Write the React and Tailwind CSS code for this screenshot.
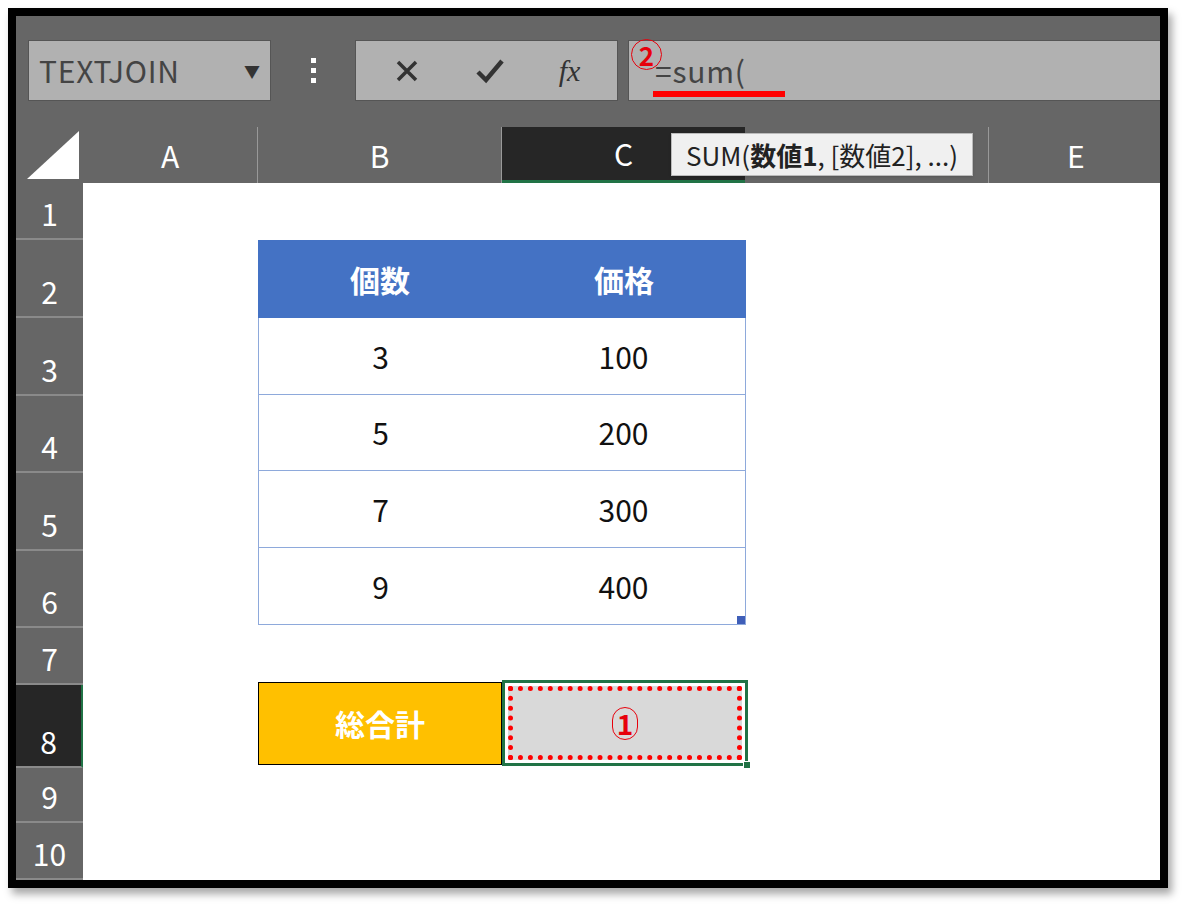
export default function App() {
  const rows = [
    { n: '1', h: 57 }, { n: '2', h: 78 }, { n: '3', h: 78 }, { n: '4', h: 77 }, { n: '5', h: 78 },
    { n: '6', h: 77 }, { n: '7', h: 57 }, { n: '8', h: 83 }, { n: '9', h: 55 }, { n: '10', h: 57 },
  ];
  const data = [['3', '100'], ['5', '200'], ['7', '300'], ['9', '400']];
  const font = { fontFamily: '"Noto Sans CJK JP", "Noto Sans", sans-serif' };
  return (
    <div className="w-[1186px] h-[905px] bg-white p-[8px] pb-[17px]" style={font}>
      <div className="w-[1160px] h-[880px] bg-black p-[8px] pr-[8px] shadow-[4px_6px_8px_rgba(0,0,0,0.35)]">
        <div className="w-[1144px] h-[864px] bg-[#666666] flex flex-col overflow-hidden">
          {/* formula bar */}
          <div className="h-[111px] flex items-start pt-[24px] pl-[12px] gap-[10px] relative">
            <div className="w-[243px] h-[61px] bg-[#b1b1b1] border border-[#555] flex items-center justify-between px-[10px] text-[30px] text-[#444]">
              <span className="tracking-wide">TEXTJOIN</span>
              <span className="text-[16px] text-[#333]">▼</span>
            </div>
            <div className="w-[64px] h-[61px] flex flex-col items-center justify-center gap-[5px]">
              <span className="w-[5px] h-[5px] bg-white" /><span className="w-[5px] h-[5px] bg-white" /><span className="w-[5px] h-[5px] bg-white" />
            </div>
            <div className="w-[263px] h-[61px] bg-[#b1b1b1] border border-[#555] flex items-center justify-around px-[10px] text-[#333]">
              <svg width="28" height="28" viewBox="0 0 28 28"><path d="M5 5L23 23M23 5L5 23" stroke="#333" strokeWidth="3.5" /></svg>
              <svg width="32" height="28" viewBox="0 0 32 28"><path d="M4 15L12 23L28 4" stroke="#333" strokeWidth="4.5" fill="none" /></svg>
              <span className="italic text-[30px]" style={{ fontFamily: '"Liberation Serif", serif' }}>fx</span>
            </div>
            <div className="flex-1 h-[61px] bg-[#b1b1b1] border border-[#555] border-r-0 flex items-center pl-[26px] text-[30px] text-[#444] relative">
              <span className="tracking-wide">=sum(</span>
              <span className="absolute left-[2px] top-[-2px] w-[31px] h-[31px] rounded-full border border-red-600 text-red-600 text-[26px] font-bold flex items-center justify-center leading-none">2</span>
              <span className="absolute left-[24px] top-[50px] w-[132px] h-[6px] bg-[#ff0000]" />
            </div>
          </div>
          {/* column header */}
          <div className="h-[56px] flex text-white text-[30px]">
            <div className="w-[67px] flex items-end justify-end pr-[4px] pb-[4px]">
              <svg width="52" height="48" viewBox="0 0 52 48"><polygon points="52,0 52,48 0,48" fill="#fff" /></svg>
            </div>
            <div className="w-[175px] flex items-center justify-center border-r border-[#999]">A</div>
            <div className="w-[244px] flex items-center justify-center border-r border-[#999]">B</div>
            <div className="w-[243px] flex items-center justify-center bg-[#262626] border-b-[3px] border-[#217346]">C</div>
            <div className="w-[244px] flex items-center justify-center border-r border-[#999] relative">
              <div className="absolute left-[-74px] top-[6px] h-[43px] px-[14px] bg-[#f0f0f0] border border-[#bbb] text-[#222] text-[26px] flex items-center whitespace-nowrap shadow">
                SUM(<b>数値1</b>, [数値2], ...)
              </div>
            </div>
            <div className="flex-1 flex items-center pl-[78px]">E</div>
          </div>
          {/* sheet */}
          <div className="flex-1 flex">
            <div className="w-[67px] flex flex-col text-white text-[30px]">
              {rows.map((r) => (
                <div key={r.n} style={{ height: r.h }} className={`flex items-end justify-center pb-[2px] border-b-2 border-[#8a8a8a] ${r.n === '8' ? 'bg-[#262626] border-r-2 border-r-[#217346]' : ''}`}>{r.n}</div>
              ))}
            </div>
            <div className="flex-1 bg-white pl-[175px] text-[30px] text-[#111]">
              <div className="h-[57px]" />
              <div className="w-[488px]">
                <div className="h-[78px] bg-[#4472c4] flex text-white font-bold">
                  <div className="w-[244px] flex items-center justify-center">個数</div>
                  <div className="flex-1 flex items-center justify-center">価格</div>
                </div>
                <div className="border border-t-0 border-[#8ea9db] relative">
                  {data.map((d, i) => (
                    <div key={i} className={`flex ${i === 1 || i === 3 ? 'h-[76px]' : 'h-[77px]'} ${i < 3 ? 'border-b border-[#8ea9db]' : ''}`}>
                      <div className="w-[243px] flex items-center justify-center">{d[0]}</div>
                      <div className="flex-1 flex items-center justify-center">{d[1]}</div>
                    </div>
                  ))}
                  <span className="absolute right-0 bottom-0 w-[8px] h-[8px] bg-[#3f5eb8]" />
                </div>
              </div>
              <div className="h-[57px]" />
              <div className="flex h-[83px]">
                <div className="w-[244px] bg-[#ffc000] border border-black flex items-center justify-center text-white font-bold">総合計</div>
                <div className="w-[246px] h-[86px] -mt-[2px] border-[3px] border-[#217346] p-[3px] bg-white relative">
                  <div className="w-full h-full bg-[#d9d9d9] border-[5px] border-dotted border-[#ff0000] flex items-center justify-center">
                    <span className="w-[26px] h-[33px] rounded-full border border-red-600 text-red-600 text-[28px] font-bold flex items-center justify-center leading-none">1</span>
                  </div>
                  <span className="absolute right-[-6px] bottom-[-6px] w-[8px] h-[8px] bg-[#217346] border border-white" />
                </div>
              </div>
            </div>
          </div>
        </div>
      </div>
    </div>
  );
}
